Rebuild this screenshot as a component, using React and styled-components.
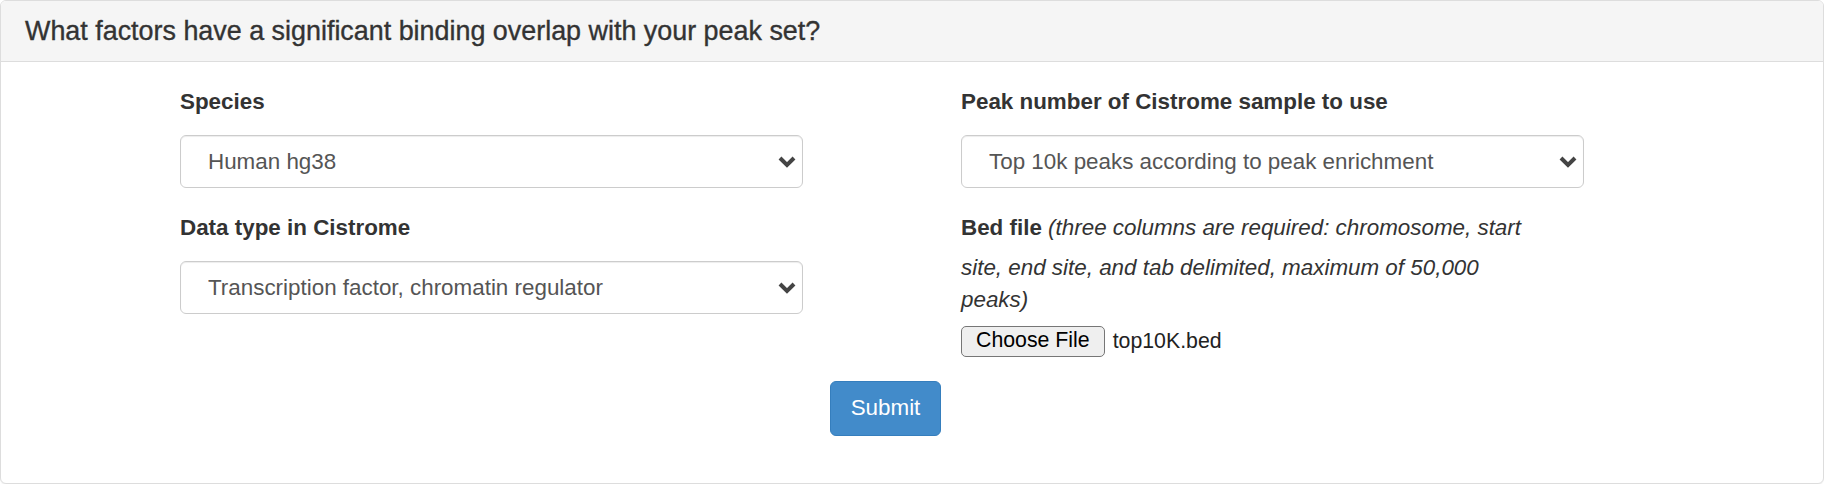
import React from 'react';
import styled, { createGlobalStyle } from 'styled-components';

const GlobalStyle = createGlobalStyle`
  html, body {
    margin: 0;
    padding: 0;
    background: #fff;
  }
  body {
    font-family: "Liberation Sans", Arial, Helvetica, sans-serif;
    color: #333;
  }
  * {
    box-sizing: border-box;
  }
`;

const Panel = styled.div`
  height: 484px;
  border: 1px solid #ddd;
  border-radius: 6px;
  background: #fff;
  box-shadow: 0 1px 1px rgba(0, 0, 0, 0.05);
  overflow: hidden;
`;

const PanelHeading = styled.div`
  background: #f5f5f5;
  border-bottom: 1px solid #ddd;
  padding: 16px 24px;
`;

const PanelTitle = styled.h3`
  margin: 0;
  font-size: 26.9px;
  font-weight: 500;
  line-height: 28px;
  color: #333;
  -webkit-text-stroke: 0.35px #333;
`;

const PanelBody = styled.div`
  padding: 24px 0 24px 179px;
`;

const Form = styled.form`
  width: 1411px;
`;

const Grid = styled.div`
  display: grid;
  grid-template-columns: 623px 623px;
  column-gap: 158px;
`;

const Column = styled.div`
  display: flex;
  flex-direction: column;
`;

const FormGroup = styled.div`
  margin-bottom: 24px;
`;

const Label = styled.label`
  display: block;
  font-size: 22.4px;
  font-weight: 700;
  line-height: 32px;
  margin-bottom: 17px;
  color: #333;
`;

const BedLabel = styled.label`
  display: block;
  max-width: 562px;
  font-size: 22.4px;
  line-height: 32px;
  margin-bottom: 10px;
  color: #333;
  strong {
    font-weight: 700;
  }
  em {
    font-style: italic;
    font-weight: 400;
  }
`;

const BedNote = styled.em`
  display: block;
  margin-top: 7.5px;
`;

const SelectWrap = styled.div`
  position: relative;
  width: 100%;
`;

const Select = styled.select`
  appearance: none;
  -webkit-appearance: none;
  width: 100%;
  height: 53px;
  padding: 0 40px 0 27px;
  font-family: "Liberation Sans", Arial, sans-serif;
  font-size: 22.4px;
  color: #555;
  background: #fff;
  border: 1.5px solid #ccc;
  border-radius: 6px;
  box-shadow: inset 0 1px 1px rgba(0, 0, 0, 0.075);
  outline: none;
`;

const Chevron = styled.svg`
  position: absolute;
  right: 6px;
  top: 50%;
  transform: translateY(-50%);
  pointer-events: none;
`;

const FileRow = styled.div`
  display: flex;
  align-items: center;
  gap: 8px;
`;

const FileButton = styled.button`
  height: 31px;
  padding: 0 14px;
  font-family: "Liberation Sans", Arial, sans-serif;
  font-size: 21.3px;
  color: #000;
  background: #efefef;
  border: 1.5px solid #767676;
  border-radius: 5px;
  line-height: 1;
`;

const FileName = styled.span`
  font-size: 21.3px;
  color: #222;
`;

const ButtonRow = styled.div`
  display: flex;
  justify-content: center;
`;

const SubmitButton = styled.button`
  height: 55px;
  padding: 0 20px;
  font-family: "Liberation Sans", Arial, sans-serif;
  font-size: 22.4px;
  color: #fff;
  background: #428bca;
  border: 1.5px solid #357ebd;
  border-radius: 6px;
  cursor: pointer;
`;

const SelectField = ({ children }) => (
  <SelectWrap>
    <Select defaultValue="0">{children}</Select>
    <Chevron width="20" height="14" viewBox="0 0 20 14">
      <polyline points="3,3 10,10 17,3" fill="none" stroke="#444" strokeWidth="4" />
    </Chevron>
  </SelectWrap>
);

const App = () => (
  <>
    <GlobalStyle />
    <Panel>
      <PanelHeading>
        <PanelTitle>What factors have a significant binding overlap with your peak set?</PanelTitle>
      </PanelHeading>
      <PanelBody>
        <Form onSubmit={(e) => e.preventDefault()}>
          <Grid>
            <Column>
              <FormGroup>
                <Label>Species</Label>
                <SelectField>
                  <option value="0">Human hg38</option>
                  <option value="1">Mouse mm10</option>
                </SelectField>
              </FormGroup>
              <FormGroup>
                <Label>Data type in Cistrome</Label>
                <SelectField>
                  <option value="0">Transcription factor, chromatin regulator</option>
                  <option value="1">Histone mark and variants</option>
                </SelectField>
              </FormGroup>
            </Column>
            <Column>
              <FormGroup>
                <Label>Peak number of Cistrome sample to use</Label>
                <SelectField>
                  <option value="0">Top 10k peaks according to peak enrichment</option>
                  <option value="1">All peaks in each Cistrome sample</option>
                </SelectField>
              </FormGroup>
              <FormGroup>
                <BedLabel>
                  <strong>Bed file</strong> <em>(three columns are required: chromosome, start</em>
                  <BedNote>site, end site, and tab delimited, maximum of 50,000 peaks)</BedNote>
                </BedLabel>
                <FileRow>
                  <FileButton type="button">Choose File</FileButton>
                  <FileName>top10K.bed</FileName>
                </FileRow>
              </FormGroup>
            </Column>
          </Grid>
          <ButtonRow>
            <SubmitButton type="submit">Submit</SubmitButton>
          </ButtonRow>
        </Form>
      </PanelBody>
    </Panel>
  </>
);

export default App;
